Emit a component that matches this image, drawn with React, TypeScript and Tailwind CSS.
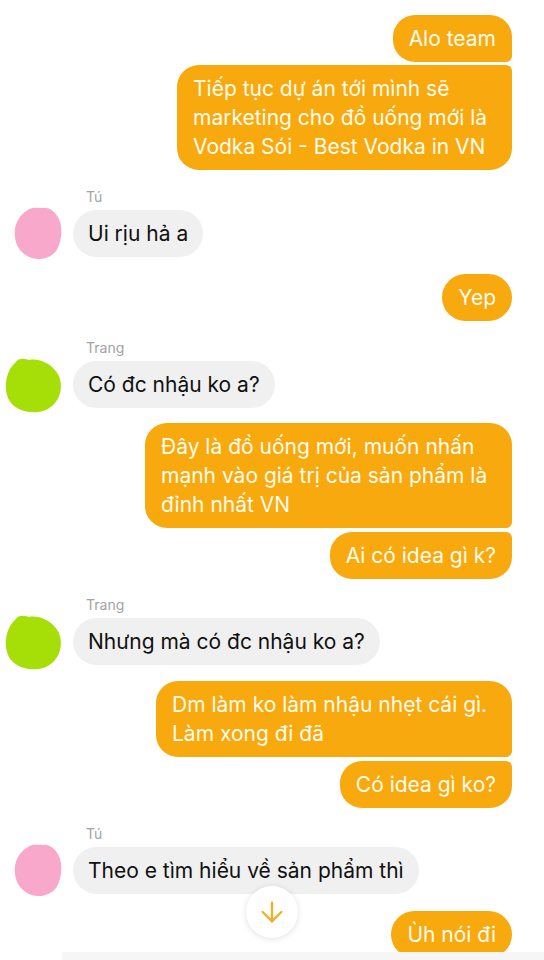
import { ArrowDown } from 'lucide-react';
import { ReactNode } from 'react';

const font = { fontFamily: 'Inter, "Noto Sans", sans-serif' };

type Pos = 'single' | 'first' | 'last';

const MineBubble = ({ children, pos = 'single', className = '' }: { children: ReactNode; pos?: Pos; className?: string }) => {
  const corners =
    pos === 'first' ? 'rounded-[22px] rounded-br-[6px]' : pos === 'last' ? 'rounded-[22px] rounded-tr-[6px]' : 'rounded-[24px]';
  return (
    <div className="flex justify-end pr-[32px]">
      <div
        className={`bg-[#f7a90d] text-[#fffbee] px-4 py-[9px] text-[21px] leading-[29px] ${corners} ${className}`}
      >
        {children}
      </div>
    </div>
  );
};

const PinkBlob = () => (
  <svg width="56" height="58" viewBox="0 0 60 62" className="-my-[6px] ml-[12px]">
    <path
      d="M16 6 C22 1 30 4 36 3 C44 4 50 12 52 20 C54 30 52 40 49 46 C45 55 33 60 22 57 C12 54 4 46 3 33 C2 22 7 11 16 6 Z"
      fill="#f8a9cb"
    />
  </svg>
);

const GreenBlob = () => (
  <svg width="62" height="60" viewBox="0 0 62 60" className="-my-[7px] ml-[3px]">
    <path
      d="M12 8 C16 2 22 4 26 5 C36 3 50 9 56 21 C61 34 56 49 43 55 C30 60 13 57 6 45 C0 33 3 16 12 8 Z"
      fill="#a6df08"
    />
  </svg>
);

const TheirMessage = ({ name, avatar, text, mt }: { name: string; avatar: 'pink' | 'green'; text: string; mt: string }) => (
  <div className={mt}>
    <div className="ml-[86px] text-[14px] leading-4 text-[#a3a3a3]">{name}</div>
    <div className="mt-[5px] flex items-center">
      <div className="w-[73px] shrink-0">{avatar === 'pink' ? <PinkBlob /> : <GreenBlob />}</div>
      <div className="rounded-[24px] bg-[#f0f0f0] px-[15px] py-[9px] text-[21px] leading-[29px] text-[#111]">
        {text}
      </div>
    </div>
  </div>
);

export default function App() {
  return (
    <div className="relative h-[960px] w-[544px] overflow-hidden bg-white" style={font}>
      <div className="flex flex-col pt-[15px]">
        <MineBubble pos="first">Alo team</MineBubble>
        <div className="mt-[3px]">
          <MineBubble pos="last" className="w-[335px]">
            Tiếp tục dự án tới mình sẽ
            <br />
            marketing cho đồ uống mới là
            <br />
            Vodka Sói - Best Vodka in VN
          </MineBubble>
        </div>

        <TheirMessage mt="mt-[19px]" name="Tú" avatar="pink" text="Ui rịu hả a" />

        <div className="mt-[17px]">
          <MineBubble>Yep</MineBubble>
        </div>

        <TheirMessage mt="mt-[19px]" name="Trang" avatar="green" text="Có đc nhậu ko a?" />

        <div className="mt-[15px]">
          <MineBubble pos="first" className="w-[367px]">
            Đây là đồ uống mới, muốn nhấn
            <br />
            mạnh vào giá trị của sản phẩm là
            <br />
            đỉnh nhất VN
          </MineBubble>
        </div>
        <div className="mt-[4px]">
          <MineBubble pos="last">Ai có idea gì k?</MineBubble>
        </div>

        <TheirMessage mt="mt-[18px]" name="Trang" avatar="green" text="Nhưng mà có đc nhậu ko a?" />

        <div className="mt-[16px]">
          <MineBubble pos="first" className="w-[356px]">
            Dm làm ko làm nhậu nhẹt cái gì.
            <br />
            Làm xong đi đã
          </MineBubble>
        </div>
        <div className="mt-[4px]">
          <MineBubble pos="last">Có idea gì ko?</MineBubble>
        </div>

        <TheirMessage mt="mt-[18px]" name="Tú" avatar="pink" text="Theo e tìm hiểu về sản phẩm thì" />

        <div className="mt-[17px]">
          <MineBubble>Ùh nói đi</MineBubble>
        </div>
      </div>

      {/* scroll-to-bottom button */}
      <div className="absolute left-[246px] top-[886px] flex h-[52px] w-[52px] items-center justify-center rounded-full bg-white shadow-[0_1px_6px_rgba(0,0,0,0.12)]">
        <ArrowDown size={32} strokeWidth={1.7} color="#f0b021" />
      </div>

      <div className="absolute bottom-0 left-[62px] right-0 h-[8px] bg-[#f6f6f6]" />
    </div>
  );
}
